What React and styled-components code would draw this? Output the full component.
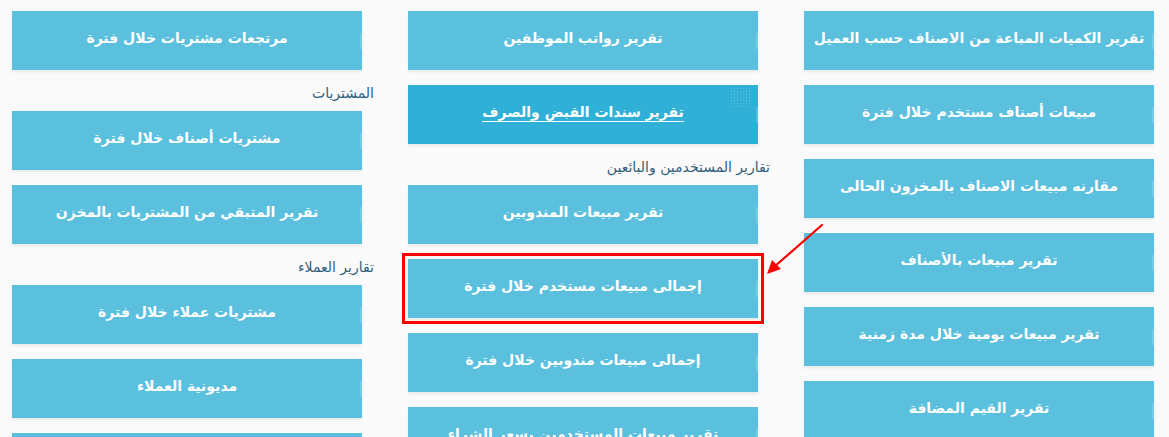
import React from 'react';
import styled, { createGlobalStyle } from 'styled-components';

const GlobalStyle = createGlobalStyle`
  * { box-sizing: border-box; }
  body {
    margin: 0;
    background: #fafafa;
    font-family: "DejaVu Sans", "Noto Sans", sans-serif;
  }
`;

const Page = styled.div`
  position: relative;
  direction: rtl;
  display: grid;
  grid-template-columns: repeat(3, 362px);
  column-gap: 34px;
  padding: 11px 3px 0 12px;
  width: 1169px;
`;

const Column = styled.div`
  display: flex;
  flex-direction: column;
  align-items: flex-start;
`;

const GroupLabel = styled.div`
  font-size: 14px;
  line-height: 16px;
  color: #31607c;
  padding-bottom: 10px;
  width: 100%;
`;

const ReportButton = styled.a`
  position: relative;
  display: flex;
  align-items: center;
  justify-content: center;
  width: 350px;
  height: 59px;
  margin-inline-start: 12px;
  margin-bottom: 15px;
  background: ${({ $active }) => ($active ? '#30b0d6' : '#5bc0de')};
  color: #fff;
  font-size: 14px;
  font-weight: bold;
  white-space: nowrap;
  text-decoration: ${({ $active }) => ($active ? 'underline' : 'none')};
  text-underline-offset: 4px;
  box-shadow: 0 2px 3px rgba(0, 0, 0, 0.07);
  outline: ${({ $marked }) => ($marked ? '3px solid #f00' : 'none')};
  outline-offset: 3px;
  padding-bottom: 6px;

  &::after {
    content: '';
    position: absolute;
    right: 0;
    top: 22px;
    width: 2px;
    height: 16px;
    background: rgba(255, 255, 255, 0.18);
  }
`;

const Texture = styled.span`
  position: absolute;
  top: 2px;
  right: 6px;
  width: 22px;
  height: 22px;
  opacity: 0.25;
  background-image: radial-gradient(rgba(255, 255, 255, 0.9) 0.8px, transparent 1px);
  background-size: 3px 3px;
`;

const Arrow = styled.svg`
  position: absolute;
  left: 760px;
  top: 220px;
  width: 70px;
  height: 60px;
  pointer-events: none;
`;

const columns = [
  [
    { text: 'تقرير الكميات المباعة من الاصناف حسب العميل' },
    { text: 'مبيعات أصناف مستخدم خلال فترة' },
    { text: 'مقارنه مبيعات الاصناف بالمخزون الحالى' },
    { text: 'تقرير مبيعات بالأصناف' },
    { text: 'تقرير مبيعات يومية خلال مدة زمنية' },
    { text: 'تقرير القيم المضافة' },
  ],
  [
    { text: 'تقرير رواتب الموظفين' },
    { text: 'تقرير سندات القبض والصرف', active: true },
    { label: 'تقارير المستخدمين والبائعين' },
    { text: 'تقرير مبيعات المندوبين' },
    { text: 'إجمالى مبيعات مستخدم خلال فترة', marked: true },
    { text: 'إجمالى مبيعات مندوبين خلال فترة' },
    { text: 'تقرير مبيعات المستخدمين بسعر الشراء' },
  ],
  [
    { text: 'مرتجعات مشتريات خلال فترة' },
    { label: 'المشتريات' },
    { text: 'مشتريات أصناف خلال فترة' },
    { text: 'تقرير المتبقي من المشتريات بالمخزن' },
    { label: 'تقارير العملاء' },
    { text: 'مشتريات عملاء خلال فترة' },
    { text: 'مديونية العملاء' },
    { text: 'كشف حساب عميل' },
  ],
];

const App = () => {
  return (
    <>
      <GlobalStyle />
      <Page>
        {columns.map((items, ci) => (
          <Column key={ci}>
            {items.map((item, idx) =>
              item.label ? (
                <GroupLabel key={idx}>{item.label}</GroupLabel>
              ) : (
                <ReportButton key={idx} $active={item.active} $marked={item.marked}>
                  {item.active && <Texture />}
                  {item.text}
                </ReportButton>
              )
            )}
          </Column>
        ))}
        <Arrow viewBox="0 0 70 60">
          <line x1="62" y1="5" x2="14" y2="47" stroke="#f00" strokeWidth="2.2" strokeLinecap="round" />
          <polygon points="7,54 12,40 21,49" fill="#f00" />
        </Arrow>
      </Page>
    </>
  );
};

export default App;
